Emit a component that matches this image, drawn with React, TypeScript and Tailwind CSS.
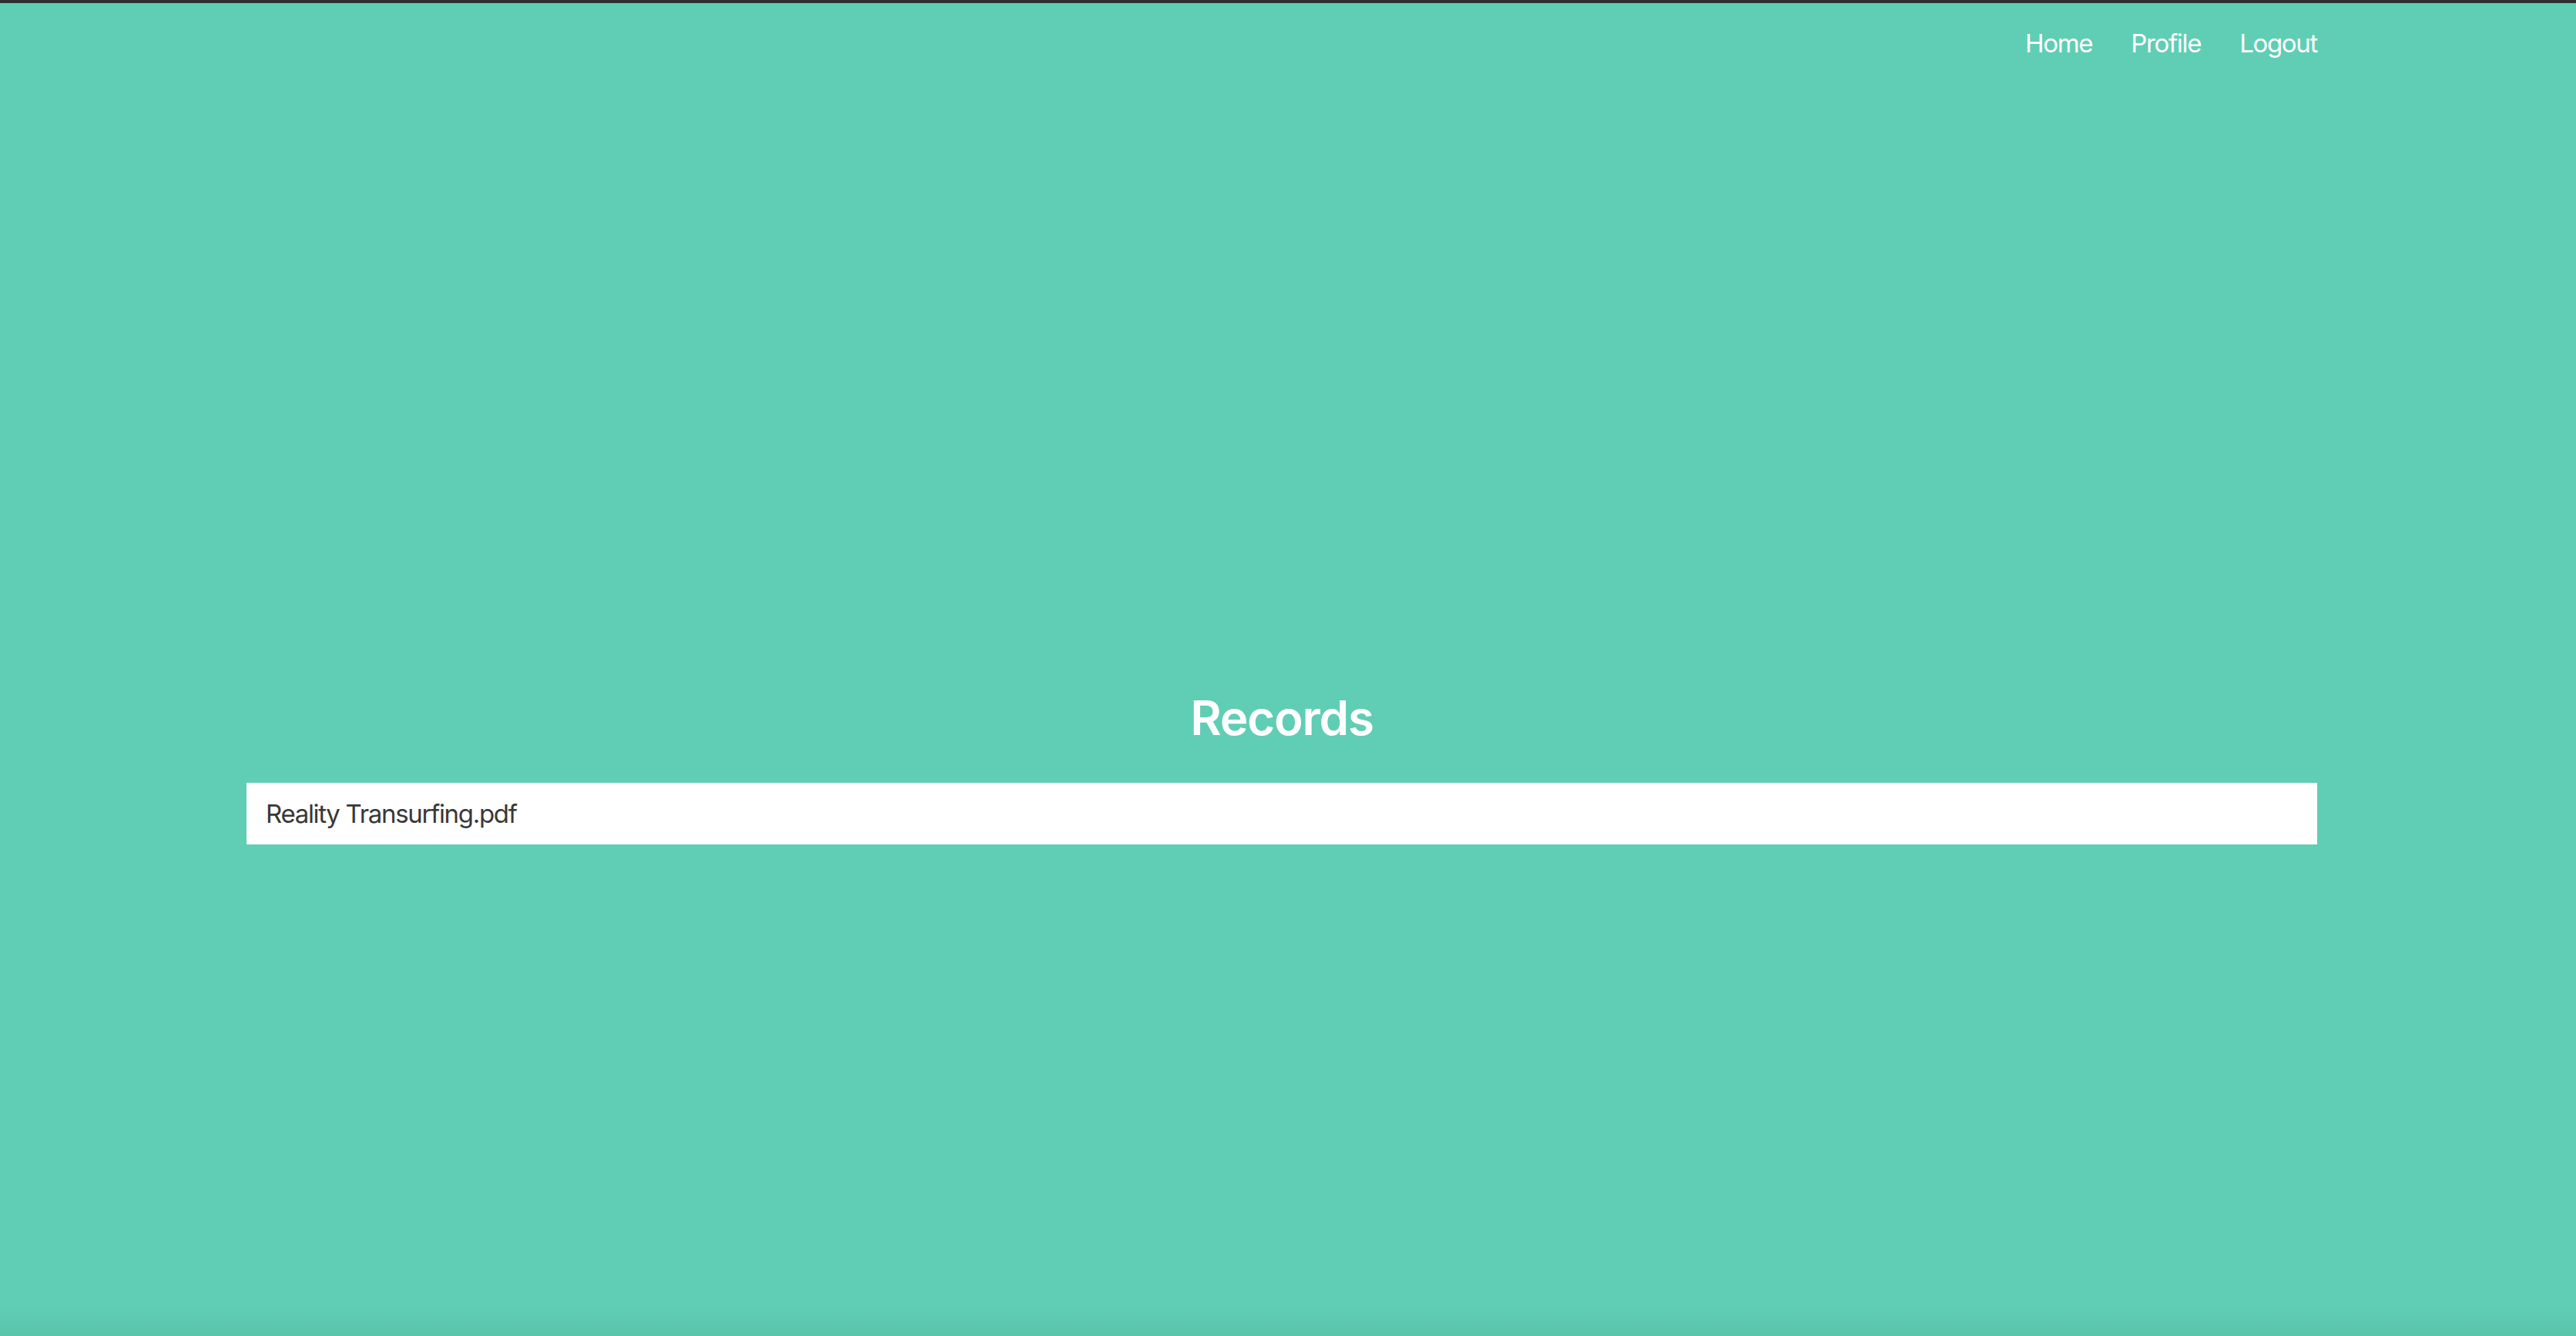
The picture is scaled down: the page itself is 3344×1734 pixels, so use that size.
export default function App() {
  const links = ['Home', 'Profile', 'Logout'];
  const records = ['Reality Transurfing.pdf'];

  return (
    <div
      className="min-h-screen flex flex-col bg-[#5fceb4] border-t-4 border-[#2e3032]"
      style={{ fontFamily: 'Inter, "Noto Sans", sans-serif' }}
    >
      {/* Top navigation */}
      <nav className="pt-[36px] ml-[320px] w-[2688px] flex justify-end gap-[50px]">
        {links.map((l) => (
          <a key={l} href="#" className="text-[33px] leading-none tracking-[-0.04em] text-white">
            {l}
          </a>
        ))}
      </nav>

      {/* Records list */}
      <main className="flex-1 ml-[320px] w-[2688px] flex flex-col">
        <h1 className="mt-[828px] text-center text-[62px] leading-none font-semibold tracking-[-0.02em] text-white">
          Records
        </h1>
        <ul className="mt-[53px]">
          {records.map((r) => (
            <li
              key={r}
              className="h-[80px] bg-white flex items-center pl-[25px] text-[33px] leading-none tracking-[-0.04em] text-[#383838]"
            >
              {r}
            </li>
          ))}
        </ul>
      </main>

      <div className="h-[40px] bg-gradient-to-b from-transparent to-black/5" />
    </div>
  );
}
